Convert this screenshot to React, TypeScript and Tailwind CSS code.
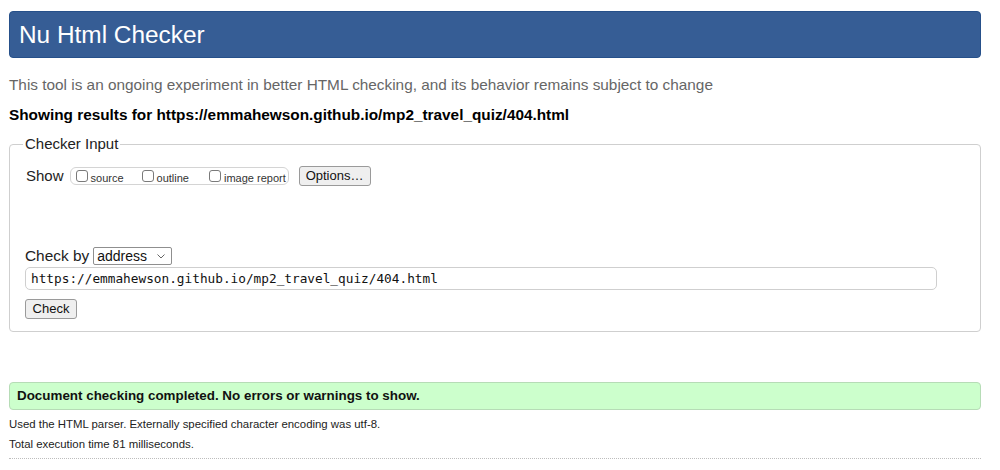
import React from "react";

function Box({ label, ml }: { label: string; ml: string }) {
  return (
    <span className={`flex items-center ${ml}`}>
      <span className="inline-block w-[12px] h-[12px] border border-[#7a7a7a] rounded-[3px] bg-white" />
      <span className="ml-[3px] mt-[3px] text-[11px] leading-[12px] text-[#333]">{label}</span>
    </span>
  );
}

export default function App() {
  return (
    <div
      className="w-[1000px] h-[470px] bg-white overflow-hidden text-black"
      style={{ fontFamily: '"Liberation Sans", Arial, sans-serif' }}
    >
      <div className="ml-[9px] w-[972px]">
        <div className="mt-[11px] h-[47px] bg-[#365d95] border border-[#26508a] rounded-[4px] flex items-center pl-[9px]">
          <h1 className="text-[24.4px] leading-[28px] text-white">Nu Html Checker</h1>
        </div>

        <p className="mt-[18px] text-[15.35px] leading-[18px] text-[#666]">
          This tool is an ongoing experiment in better HTML checking, and its behavior remains subject to change
        </p>
        <p className="mt-[12px] text-[15.35px] leading-[18px] font-bold">
          Showing results for https://emmahewson.github.io/mp2_travel_quiz/404.html
        </p>

        <fieldset className="mt-[11px] border border-[#cfcfcf] rounded-[4px] pl-[13px] pt-[13px] pb-[12px]">
          <legend className="px-[2px] text-[15px] leading-[18px] text-[#222]">Checker Input</legend>
          <div className="pl-[2px]">
            <div className="flex items-center h-[20px]">
              <span className="text-[15px] leading-[18px] ml-[1px] text-[#222]">Show</span>
              <span className="ml-[6px] h-[18px] w-[219px] border border-[#d4d4d4] rounded-[6px] flex items-center">
                <Box label="source" ml="ml-[5px]" />
                <Box label="outline" ml="ml-[18px]" />
                <Box label="image report" ml="ml-[20px]" />
              </span>
              <button className="ml-[10px] h-[20px] w-[72px] border border-[#9a9a9a] rounded-[3px] bg-[#efefef] text-[13px] leading-[16px] text-[#111]">
                Options…
              </button>
            </div>

            <div className="mt-[61px] flex items-center h-[18px]">
              <span className="text-[15.4px] leading-[18px] text-[#222]">Check by</span>
              <span className="ml-[4px] h-[18px] w-[79px] border border-[#8f8f8f] rounded-[2px] bg-white flex items-center justify-between pl-[3px] pr-[6px]">
                <span className="text-[14px] leading-[16px] text-[#111]">address</span>
                <svg width="8" height="5" viewBox="0 0 8 5" className="mt-[1px]">
                  <path d="M0.5 0.5 L4 4 L7.5 0.5" fill="none" stroke="#666" strokeWidth="1" />
                </svg>
              </span>
            </div>

            <div className="mt-[2px] h-[23px] w-[912px] border border-[#cfcfcf] rounded-[5px] flex items-center pl-[5px]">
              <span
                className="text-[12.75px] leading-[16px] text-[#111]"
                style={{ fontFamily: '"DejaVu Sans Mono", "Liberation Mono", monospace' }}
              >
                https://emmahewson.github.io/mp2_travel_quiz/404.html
              </span>
            </div>

            <button className="mt-[9px] h-[20px] w-[52px] border border-[#9a9a9a] rounded-[3px] bg-[#efefef] text-[13px] leading-[16px] text-[#111] block">
              Check
            </button>
          </div>
        </fieldset>

        <div className="mt-[50px] h-[28px] bg-[#ccffcc] border border-[#b6dcb6] rounded-[4px] flex items-center pl-[7px]">
          <span className="text-[13.4px] leading-[16px] font-bold text-[#111]">
            Document checking completed. No errors or warnings to show.
          </span>
        </div>
        <p className="mt-[4px] text-[11.4px] leading-[20px] text-[#222]">
          Used the HTML parser. Externally specified character encoding was utf-8.
        </p>
        <p className="text-[11.4px] leading-[20px] text-[#222]">Total execution time 81 milliseconds.</p>
        <div className="mt-[4px] border-t border-dotted border-[#bdbdbd]" />
      </div>
    </div>
  );
}
